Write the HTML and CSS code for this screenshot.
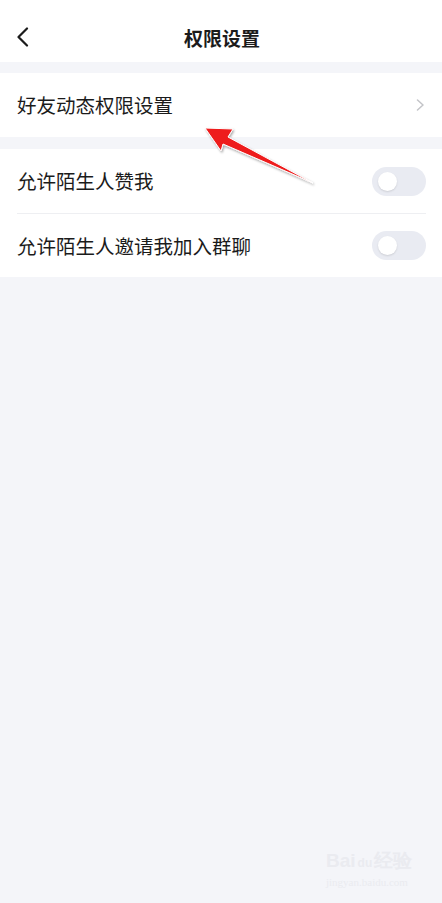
FILE: index.html
```html
<!DOCTYPE html>
<html>
<head>
    <meta charset="UTF-8">
    <meta name="viewport" content="width=device-width, initial-scale=1.0">
    <title>权限设置</title>
    <link rel="stylesheet" href="styles.css">
</head>
<body>
    <div class="page">
        <div class="topbar">
            <svg class="back" width="14" height="20" viewBox="0 0 14 20">
                <path d="M11 1.5 L2.5 10 L11 18.5" fill="none" stroke="#1b1b1b" stroke-width="2.2" stroke-linecap="round" stroke-linejoin="round"/>
            </svg>
            <h1 class="title">权限设置</h1>
        </div>

        <div class="group">
            <div class="row">
                <span class="label">好友动态权限设置</span>
                <svg class="chevron" width="9" height="12" viewBox="0 0 9 12">
                    <path d="M1.5 1 L7 6 L1.5 11" fill="none" stroke="#c3c4c8" stroke-width="1.5" stroke-linecap="round" stroke-linejoin="round"/>
                </svg>
            </div>
        </div>

        <div class="group">
            <div class="row">
                <span class="label">允许陌生人赞我</span>
                <span class="toggle"><span class="knob"></span></span>
            </div>
            <div class="row">
                <span class="label">允许陌生人邀请我加入群聊</span>
                <span class="toggle"><span class="knob"></span></span>
            </div>
        </div>

        <!-- annotation arrow drawn over the screenshot -->
        <svg class="pointer" width="442" height="903" viewBox="0 0 442 903">
            <defs>
                <filter id="shade" x="-20%" y="-20%" width="140%" height="140%">
                    <feDropShadow dx="1" dy="1.5" stdDeviation="1.2" flood-color="#000" flood-opacity="0.35"/>
                </filter>
            </defs>
            <polygon points="205,128 233,129 228,137 313,183 223,144 221,151" fill="#ee1c1c" stroke="#fff" stroke-width="1" stroke-linejoin="round" filter="url(#shade)"/>
        </svg>

        <div class="watermark">
            <div class="wm-top">Bai<span class="paw">du</span>经验</div>
            <div class="wm-url">jingyan.baidu.com</div>
        </div>
    </div>
</body>
</html>
```

FILE: styles.css
```css
body {
    margin: 0;
    background: #f4f5f9;
    font-family: "Noto Sans CJK SC", "Noto Sans", sans-serif;
    color: #1b1b1b;
}
.page {
    position: relative;
    width: 442px;
    min-height: 903px;
    overflow: hidden;
}
.topbar {
    position: relative;
    height: 62px;
    padding-top: 12px;
    box-sizing: border-box;
    background: #fff;
    display: flex;
    align-items: center;
    justify-content: center;
}
.back {
    position: absolute;
    left: 16px;
    top: 27px;
}
.title {
    margin: 0;
    font-size: 19px;
    font-weight: 700;
    line-height: 1;
    padding-left: 2px;
}
.group {
    background: #fff;
    margin-top: 11px;
    padding: 0 16px 0 17px;
}
.group + .group {
    margin-top: 12px;
}
.row {
    height: 64px;
    display: flex;
    align-items: center;
    justify-content: space-between;
}
.row + .row {
    border-top: 1px solid #eeeff2;
    height: 63px;
}
.label {
    font-size: 19.5px;
    line-height: 1;
}
.chevron {
    margin-right: 1px;
}
.toggle {
    width: 54px;
    height: 29px;
    border-radius: 15px;
    background: #e9ebf2;
    display: flex;
    align-items: center;
    padding-left: 6px;
    box-sizing: border-box;
}
.knob {
    width: 19px;
    height: 19px;
    border-radius: 50%;
    background: #fff;
    box-shadow: 0 1px 2px rgba(0, 0, 0, 0.12);
}
.pointer {
    position: absolute;
    left: 0;
    top: 0;
    pointer-events: none;
}
.watermark {
    position: absolute;
    left: 326px;
    top: 850px;
    color: #eaebf0;
    font-family: "Liberation Sans", sans-serif;
}
.wm-top {
    font-size: 19px;
    font-weight: 700;
    line-height: 22px;
}
.paw {
    font-size: 12px;
    margin: 0 2px;
}
.wm-url {
    font-family: "Liberation Serif", serif;
    font-size: 11px;
    margin-top: 2px;
}
```
